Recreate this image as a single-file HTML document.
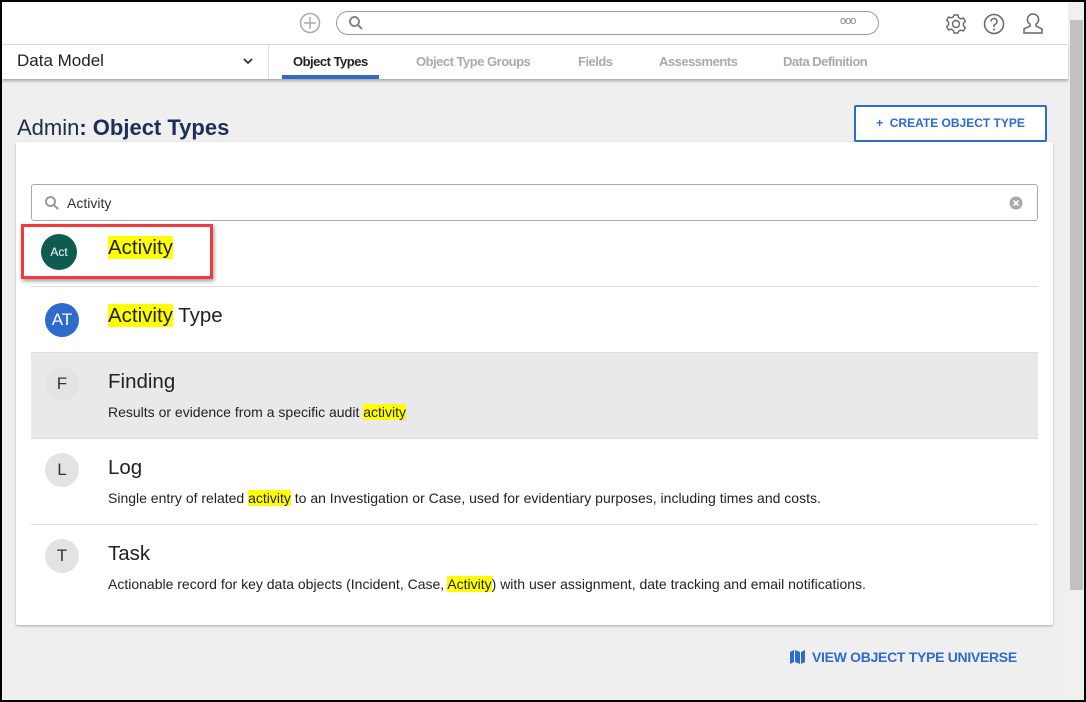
<!DOCTYPE html>
<html><head><style>
*{box-sizing:border-box;margin:0;padding:0}
body{width:1086px;height:702px;overflow:hidden;background:#000;font-family:"Liberation Sans",sans-serif;position:relative}
.page{position:absolute;left:2px;top:2px;width:1082px;height:698px;background:#efefef;overflow:hidden}
.top{position:absolute;left:0;top:0;width:1066px;height:43px;background:#fff;border-bottom:1px solid #ddd}
.nav{position:absolute;left:0;top:43px;width:1066px;height:34px;background:#fff;box-shadow:0 2px 3px rgba(0,0,0,.3)}
.a{position:absolute;white-space:nowrap}
.hl{background:#ffff00}
.card{position:absolute;left:14px;top:140px;width:1037px;height:483px;background:#fff;box-shadow:0 1px 2px rgba(0,0,0,.3);border-radius:2px}
.row{position:absolute;left:15px;width:1007px;border-bottom:1px solid #ddd}
.av{position:absolute;left:14px;width:34px;height:34px;border-radius:50%;background:#e3e3e3;color:#333;font-size:17px;text-align:center;line-height:34px}
.t{position:absolute;left:77px;font-size:20.5px;color:#222}
.d{position:absolute;left:77px;font-size:14px;color:#222}
</style></head><body><div class="page">
<div class="top">
<svg class="a" style="left:297px;top:10px" width="22" height="22" viewBox="0 0 22 22"><circle cx="11" cy="11" r="9.5" fill="none" stroke="#aaa" stroke-width="1.5"/><path d="M11 5v12M5 11h12" stroke="#aaa" stroke-width="1.5"/></svg>
<div class="a" style="left:334px;top:9px;width:543px;height:24px;border:1px solid #999;border-radius:12px"></div>
<svg class="a" style="left:346px;top:13px" width="16" height="16" viewBox="0 0 16 16"><circle cx="6.5" cy="6.5" r="4.5" fill="none" stroke="#888" stroke-width="2"/><path d="M10 10l4 4" stroke="#888" stroke-width="2"/></svg>
<div class="a" style="left:838px;top:13px;font-size:11px;color:#888;letter-spacing:-1px">ooo</div>
<svg class="a" style="left:943px;top:11px" width="22" height="22" viewBox="0 0 22 22"><circle cx="11" cy="11" r="3.5" fill="none" stroke="#666" stroke-width="1.4"/><path d="M9 2h4l.6 2.6 2.3 1.3 2.5-.9 2 3.4-2 1.8v2.6l2 1.8-2 3.4-2.5-.9-2.3 1.3L13 20H9l-.6-2.6-2.3-1.3-2.5.9-2-3.4 2-1.8V9.2l-2-1.8 2-3.4 2.5.9 2.3-1.3z" fill="none" stroke="#666" stroke-width="1.4"/></svg>
<svg class="a" style="left:981px;top:11px" width="22" height="22" viewBox="0 0 22 22"><circle cx="11" cy="11" r="9.5" fill="none" stroke="#666" stroke-width="1.5"/><path d="M8 8.5a3 3 0 1 1 4 2.8c-.8.4-1 1-1 2v.7" fill="none" stroke="#666" stroke-width="1.5"/><circle cx="11" cy="16.5" r="1" fill="#666"/></svg>
<svg class="a" style="left:1019px;top:10px" width="24" height="24" viewBox="0 0 24 24"><path d="M12 2a5.5 5.5 0 0 0-3 10.2V14l-6 3v4h18v-4l-6-3v-1.8A5.5 5.5 0 0 0 12 2z" fill="none" stroke="#666" stroke-width="1.5"/></svg>
</div>
<div class="nav">
<div class="a" style="left:15px;top:6px;font-size:17px;color:#222">Data Model</div>
<svg class="a" style="left:241px;top:12px" width="10" height="8" viewBox="0 0 10 8"><path d="M1 2l4 4 4-4" fill="none" stroke="#333" stroke-width="1.8"/></svg>
<div class="a" style="left:266px;top:0;width:1px;height:34px;background:#ddd"></div>
<div class="a" style="left:291px;top:9px;font-size:13px;color:#222;font-weight:bold;letter-spacing:-0.5px">Object Types</div>
<div class="a" style="left:280px;top:30px;width:97px;height:4px;background:#2e6bcc"></div>
<div class="a" style="left:414px;top:9px;font-size:13px;color:#aaa;font-weight:bold;letter-spacing:-0.5px">Object Type Groups</div>
<div class="a" style="left:576px;top:9px;font-size:13px;color:#aaa;font-weight:bold;letter-spacing:-0.5px">Fields</div>
<div class="a" style="left:657px;top:9px;font-size:13px;color:#aaa;font-weight:bold;letter-spacing:-0.5px">Assessments</div>
<div class="a" style="left:781px;top:9px;font-size:13px;color:#aaa;font-weight:bold;letter-spacing:-0.5px">Data Definition</div>
</div>
<div class="a" style="left:1067px;top:0;width:15px;height:698px;background:#f0f0f0"></div>
<div class="a" style="left:1068px;top:18px;width:13px;height:570px;background:#c1c1c1"></div>
<div class="a" style="left:15px;top:113px;font-size:22px;color:#1e2b4a">Admin<b style="font-weight:bold">:</b><span style="font-weight:bold;color:#1d2f55"> Object Types</span></div>
<div class="a" style="left:852px;top:103px;width:193px;height:37px;border:2px solid #2e6bcc;border-radius:2px;background:#fff;color:#2e6bcc;font-size:12px;font-weight:bold;text-align:center;line-height:33px">+&nbsp; CREATE OBJECT TYPE</div>
<div class="card">
<div class="a" style="left:15px;top:42px;width:1007px;height:37px;border:1px solid #aaa;border-radius:3px"></div>
<svg class="a" style="left:28px;top:53px" width="16" height="16" viewBox="0 0 16 16"><circle cx="6.5" cy="6.5" r="4.5" fill="none" stroke="#999" stroke-width="2"/><path d="M10 10l4 4" stroke="#999" stroke-width="2"/></svg>
<div class="a" style="left:51px;top:53px;font-size:14px;color:#333">Activity</div>
<svg class="a" style="left:993px;top:54px" width="14" height="14" viewBox="0 0 14 14"><circle cx="7" cy="7" r="6.5" fill="#aaa"/><path d="M4.5 4.5l5 5M9.5 4.5l-5 5" stroke="#fff" stroke-width="1.6"/></svg>
<div class="row" style="top:79px;height:66px"><div class="av" style="top:13px;left:10px;width:36px;height:36px;line-height:36px;background:#0e5c50;color:#fff;font-size:12px">Act</div><div class="t" style="top:15px"><span class="hl">Activity</span></div></div>
<div class="row" style="top:145px;height:66px"><div class="av" style="top:16px;background:#2e6bcc;color:#fff">AT</div><div class="t" style="top:17px"><span class="hl">Activity</span> Type</div></div>
<div class="row" style="top:211px;height:86px;background:#e9e9e9"><div class="av" style="top:14px;">F</div><div class="t" style="top:17px">Finding</div><div class="d" style="top:51px">Results or evidence from a specific audit <span class="hl">activity</span></div></div>
<div class="row" style="top:297px;height:86px"><div class="av" style="top:14px;">L</div><div class="t" style="top:17px">Log</div><div class="d" style="top:51px">Single entry of related <span class="hl">activity</span> to an Investigation or Case, used for evidentiary purposes, including times and costs.</div></div>
<div class="row" style="top:383px;height:86px;border:none"><div class="av" style="top:14px;">T</div><div class="t" style="top:17px">Task</div><div class="d" style="top:51px">Actionable record for key data objects (Incident, Case, <span class="hl">Activity</span>) with user assignment, date tracking and email notifications.</div></div>
</div>
<div class="a" style="left:19px;top:222px;width:192px;height:55px;border:3px solid #ee3c3c;box-shadow:1px 2px 4px rgba(0,0,0,.4)"></div>
<svg class="a" style="left:788px;top:648px" width="15" height="14" viewBox="0 0 15 14"><path d="M0 2l4-2v12l-4 2zM5 0l5 2v12l-5-2zM11 2l4-2v12l-4 2z" fill="#2e6bcc"/></svg>
<div class="a" style="left:810px;top:647px;font-size:14px;color:#2e6bcc;font-weight:bold;letter-spacing:-0.3px">VIEW OBJECT TYPE UNIVERSE</div>
</div></body></html>
